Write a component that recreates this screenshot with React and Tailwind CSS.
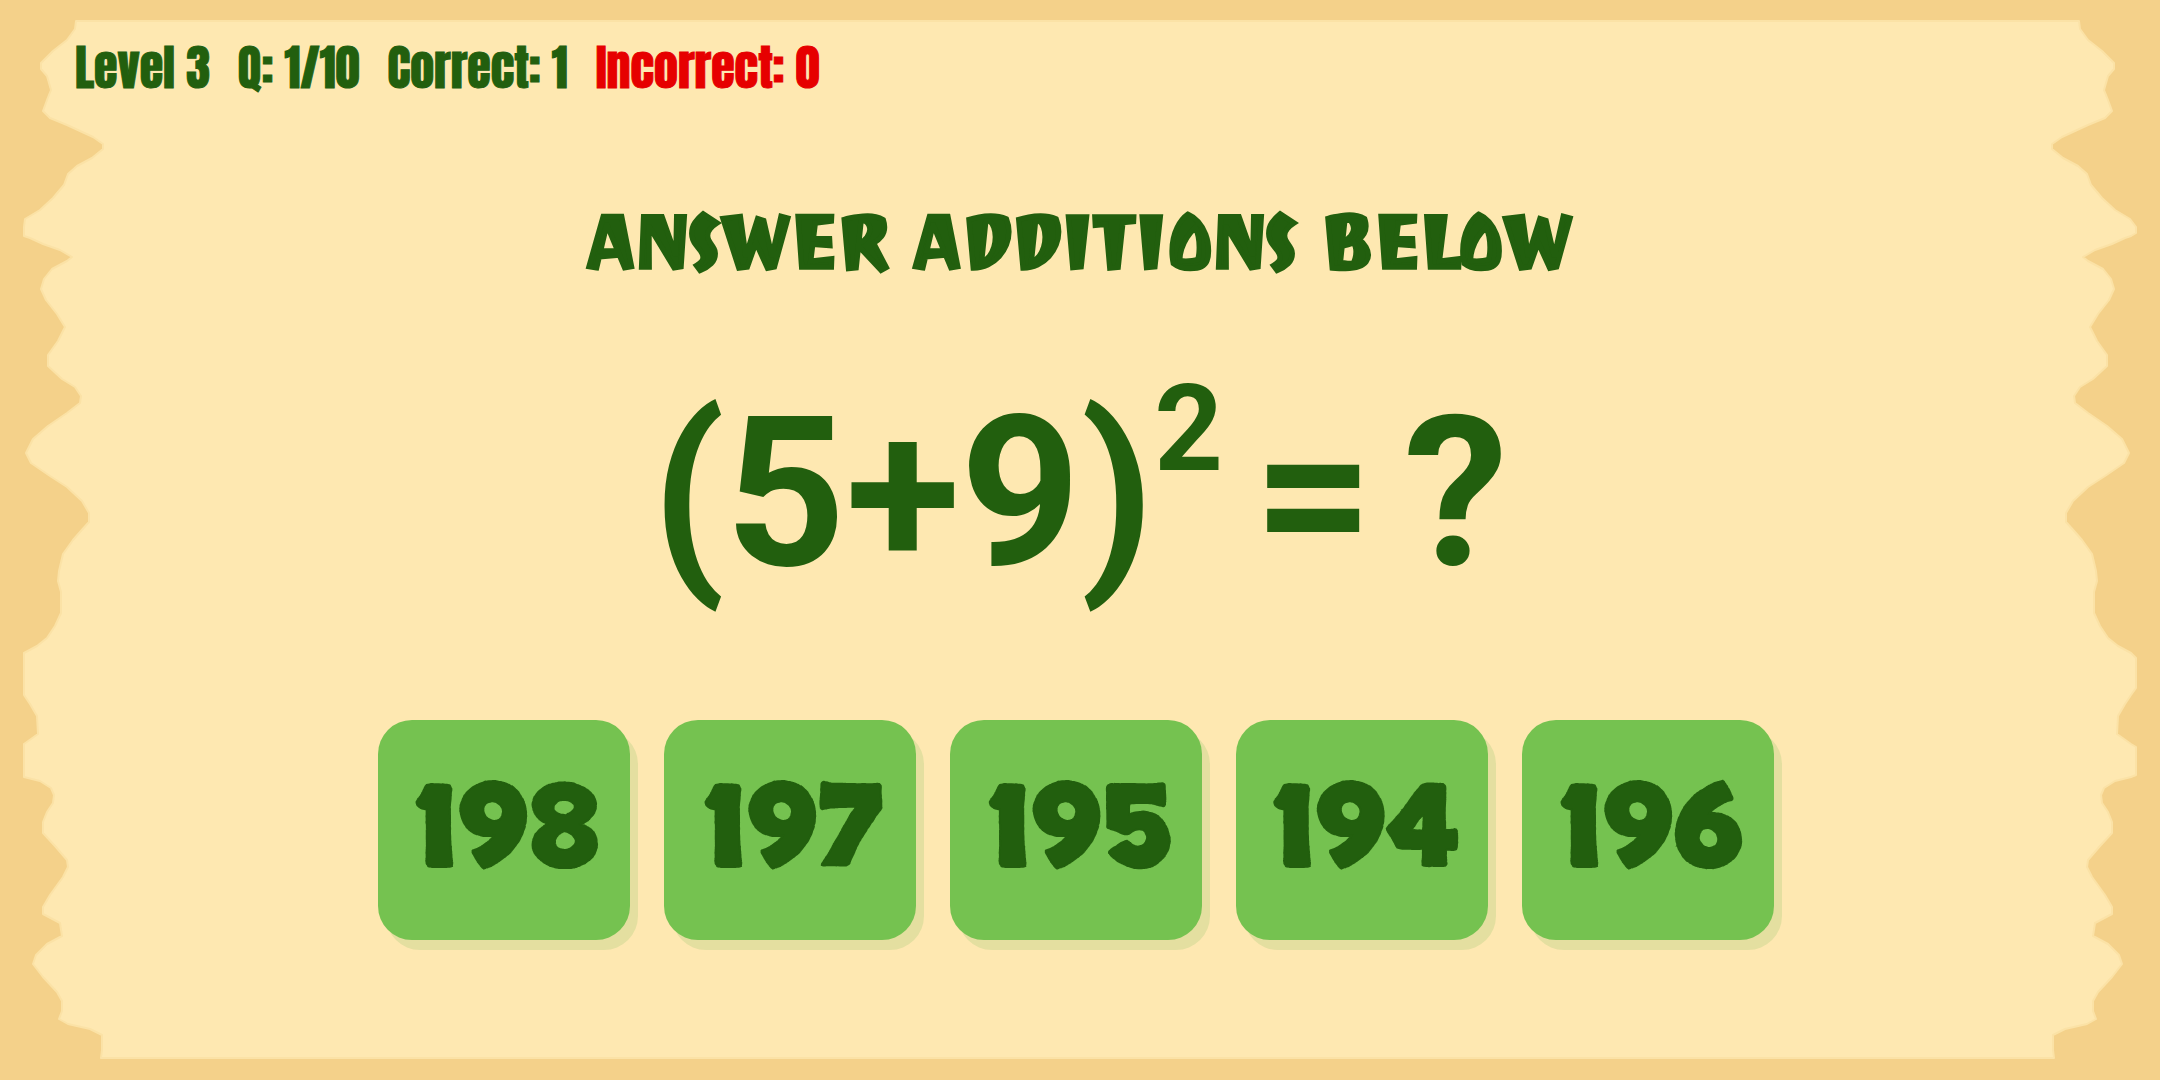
import { useState } from 'react';

// Torn paper contour, [distance from the edge, y], drawn once per side
const TORN_EDGE = [
  [76, 21], [75, 29], [67, 40], [53, 51], [41, 63], [41, 69], [47, 76], [51, 90],
  [47, 100], [43, 111], [50, 118], [67, 125], [93, 137], [103, 144], [103, 149],
  [92, 158], [77, 166], [68, 174], [64, 185], [53, 198], [40, 210], [25, 219],
  [14, 227], [19, 233], [24, 236], [30, 238], [43, 244], [60, 250], [72, 257],
  [67, 261], [52, 269], [44, 279], [41, 289], [46, 300], [57, 314], [65, 327],
  [58, 341], [48, 355], [48, 366], [62, 379], [75, 387], [81, 396], [80, 403],
  [67, 413], [48, 426], [33, 439], [26, 453], [31, 463], [50, 476], [67, 487],
  [82, 501], [89, 513], [89, 522], [80, 532], [73, 540], [63, 554], [59, 571],
  [58, 581], [61, 592], [61, 613], [55, 626], [47, 638], [37, 646], [24, 653],
  [19, 658], [15, 673], [19, 688], [24, 695], [30, 704], [37, 716], [38, 734],
  [24, 744], [19, 747], [14, 760], [19, 775], [24, 777], [40, 781], [51, 788],
  [54, 795], [53, 803], [47, 812], [43, 822], [43, 833], [55, 846], [67, 860],
  [68, 867], [63, 877], [50, 895], [43, 907], [43, 914], [60, 923], [62, 936],
  [47, 944], [36, 955], [33, 964], [43, 977], [57, 992], [62, 1001], [62, 1011],
  [59, 1019], [68, 1024], [90, 1029], [102, 1035], [102, 1050], [101, 1058],
];

const MARGIN = 24;
const leftSide = TORN_EDGE.map(([x, y]) => [Math.max(MARGIN, x), y]);
const rightSide = TORN_EDGE.map(([x, y]) => [2160 - Math.max(MARGIN, x + 5), y]).reverse();
const paperPoints = [...leftSide, ...rightSide].map((p) => p.join(',')).join(' ');

const PaperBackground = () => (
  <svg
    className="absolute inset-0 -z-10 w-full h-full"
    viewBox="0 0 2160 1080"
    preserveAspectRatio="none"
    aria-hidden="true"
  >
    <polygon points={paperPoints} fill="#fee8b1" stroke="#fbe2a6" strokeWidth="2" strokeLinejoin="round" />
  </svg>
);

const question = { base: '(5+9)', power: '2', answer: 196 };
const options = [198, 197, 195, 194, 196];

const App = () => {
  const [correct, setCorrect] = useState(1);
  const [incorrect, setIncorrect] = useState(0);

  const handleAnswer = (value) => {
    if (value === question.answer) {
      setCorrect(correct + 1);
    } else {
      setIncorrect(incorrect + 1);
    }
  };

  return (
    <div className="relative isolate min-h-screen overflow-hidden bg-[#f4d18a] text-[#225f0e]">
      <PaperBackground />

      {/* Score bar */}
      <header className="flex flex-wrap gap-x-7 px-[75px] pt-10 text-[48px] leading-[56px] font-['Impact','Anton','Roboto_Condensed',sans-serif] [-webkit-text-stroke:1px_currentColor]">
        <span>Level 3</span>
        <span>Q: 1/10</span>
        <span>Correct: {correct}</span>
        <span className="text-[#e60000]">Incorrect: {incorrect}</span>
      </header>

      <main className="flex flex-col items-center pt-[106px] pb-32">
        <h1 className="text-center uppercase text-[76px] leading-[80px] font-bold font-['Joti_One','Lato',sans-serif] [-webkit-text-stroke:3px_currentColor]">
          Answer additions below
        </h1>

        {/* Question */}
        <p className="mt-[87px] flex items-start gap-[30px] text-[210px] leading-[248px] font-bold font-['Roboto',sans-serif]">
          <span className="flex items-start">
            {question.base}
            <sup className="top-0 text-[120px] leading-[120px]">{question.power}</sup>
          </span>
          <span>=</span>
          <span>?</span>
        </p>

        {/* Answers */}
        <div className="mt-[103px] flex flex-wrap justify-center gap-[34px] pr-2">
          {options.map((value) => (
            <button
              key={value}
              type="button"
              onClick={() => handleAnswer(value)}
              className="w-[252px] h-[220px] pt-1 pl-2 rounded-[34px] bg-[#75c250] shadow-[8px_10px_0_#e4dfa0] text-[114px] leading-none font-bold font-['Skranji','Lato',sans-serif] [-webkit-text-stroke:2px_currentColor] cursor-pointer"
            >
              {value}
            </button>
          ))}
        </div>
      </main>
    </div>
  );
};

export default App;
